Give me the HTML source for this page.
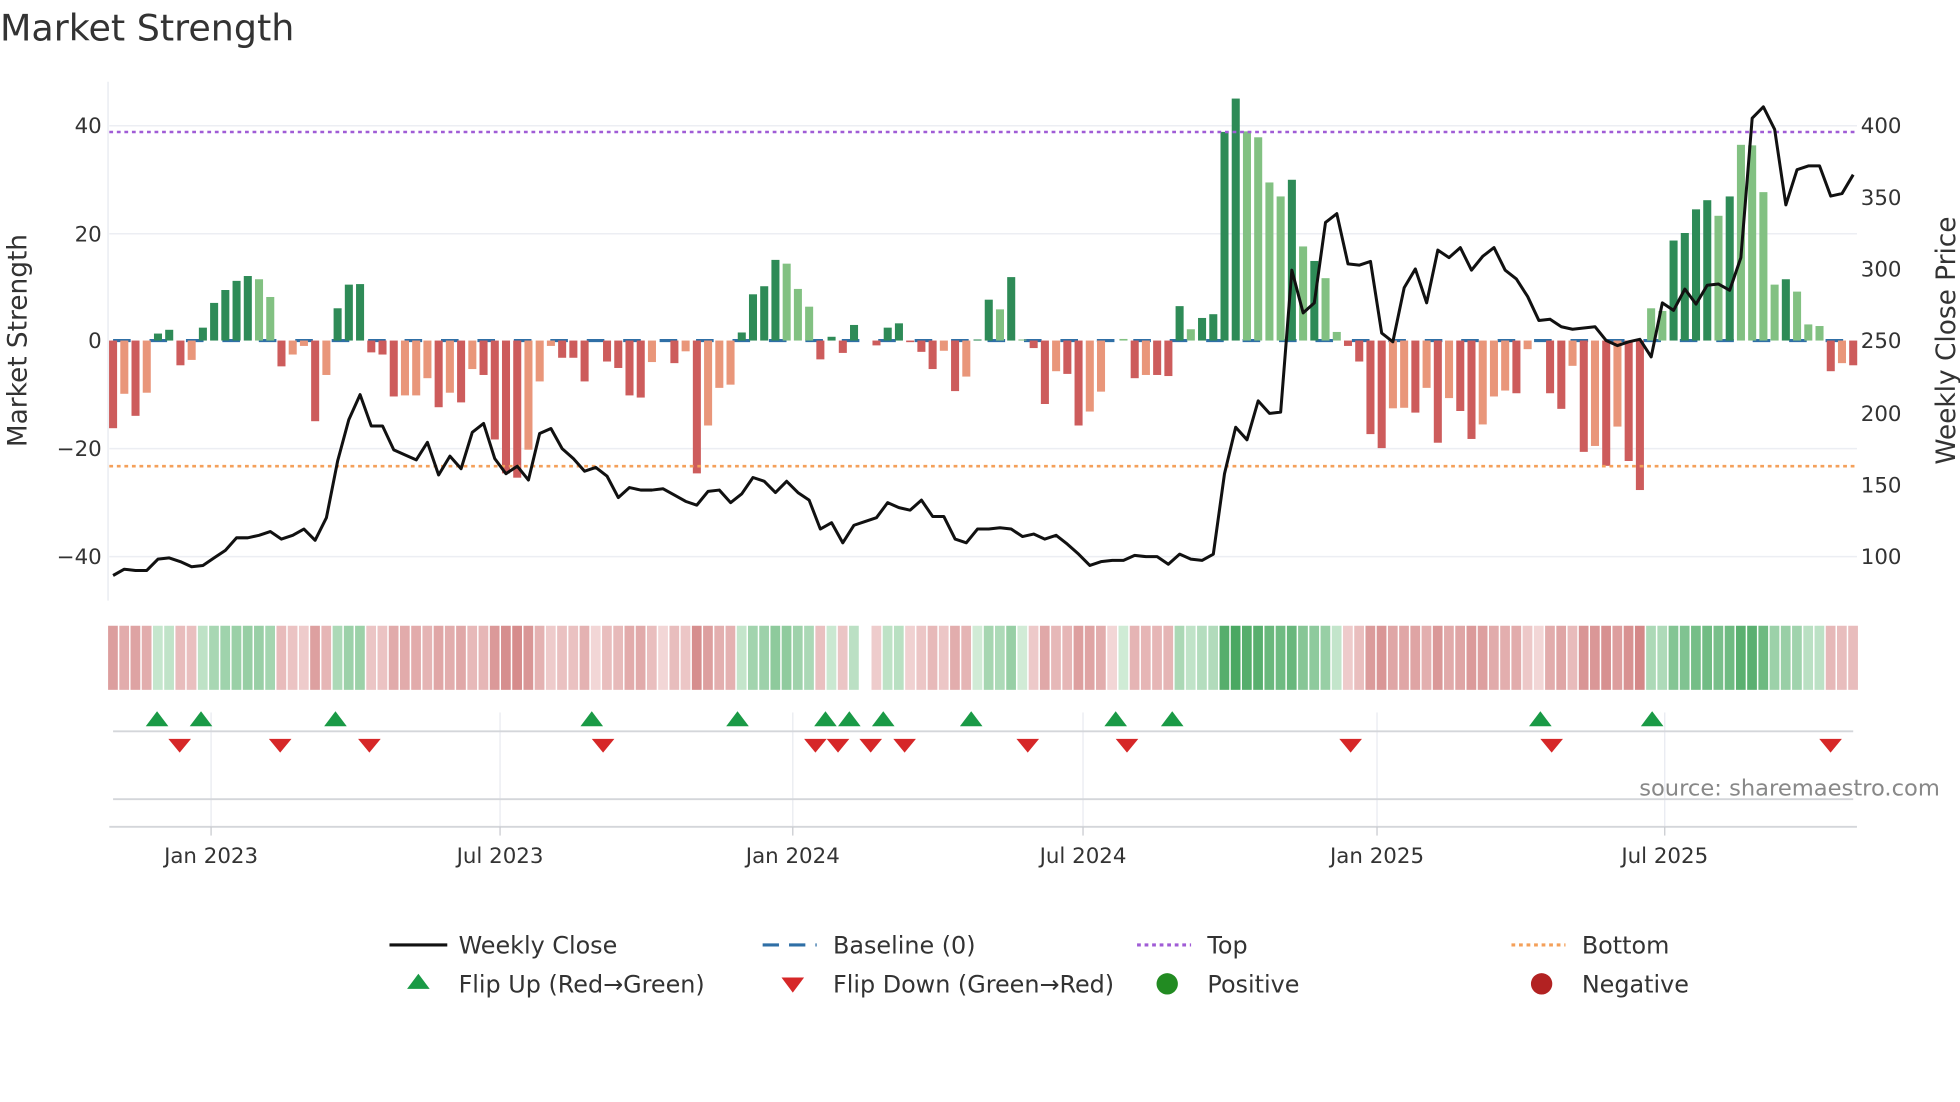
<!DOCTYPE html>
<html><head><meta charset="utf-8"><style>
html,body{margin:0;padding:0;background:#fff;}
svg{display:block;font-family:"DejaVu Sans","Liberation Sans",sans-serif;}
</style></head><body>
<svg id="s" width="1960" height="1102" viewBox="0 0 1560 877" xmlns="http://www.w3.org/2000/svg">
<rect width="1560" height="877" fill="#fff"/>
<text x="0" y="32" font-size="29" fill="#333">Market Strength</text>
<g stroke="#eceef3" stroke-width="1.2">
<line x1="87" y1="100" x2="1478" y2="100"/><line x1="87" y1="186" x2="1478" y2="186"/>
<line x1="87" y1="357" x2="1478" y2="357"/><line x1="87" y1="443" x2="1478" y2="443"/>
</g>
<line x1="86" y1="65" x2="86" y2="478" stroke="#e6e8ee" stroke-width="1"/>
<g font-size="17" fill="#333" text-anchor="end">
<text x="81" y="106">40</text><text x="81" y="192">20</text><text x="81" y="277">0</text>
<text x="81" y="363">−20</text><text x="81" y="449">−40</text>
</g>
<g font-size="17" fill="#333">
<text x="1481" y="106">400</text><text x="1481" y="163">350</text><text x="1481" y="220">300</text>
<text x="1481" y="277">250</text><text x="1481" y="335">200</text><text x="1481" y="392">150</text><text x="1481" y="449">100</text>
</g>
<text transform="translate(21,271) rotate(-90)" font-size="21" fill="#333" text-anchor="middle">Market Strength</text>
<text transform="translate(1556,271) rotate(-90)" font-size="21" fill="#333" text-anchor="middle">Weekly Close Price</text>
<line x1="90" y1="271" x2="1478" y2="271" stroke="#2f6fa6" stroke-width="2.5" stroke-dasharray="14 15"/>
<g id="bars"></g>
<line x1="87" y1="105" x2="1478" y2="105" stroke="#a05cd6" stroke-width="2" stroke-dasharray="3 3"/>
<line x1="87" y1="371" x2="1478" y2="371" stroke="#f4a05a" stroke-width="2" stroke-dasharray="3 3"/>
<polyline id="price" fill="none" stroke="#111" stroke-width="2.4" stroke-linejoin="round"/>
<g id="strip"></g>
<g stroke="#e8eaf0" stroke-width="1">
<line x1="168" y1="567" x2="168" y2="658"/><line x1="398" y1="567" x2="398" y2="658"/>
<line x1="631" y1="567" x2="631" y2="658"/><line x1="862" y1="567" x2="862" y2="658"/>
<line x1="1096" y1="567" x2="1096" y2="658"/><line x1="1325" y1="567" x2="1325" y2="658"/>
</g>
<line x1="90" y1="582" x2="1475" y2="582" stroke="#d4d6da" stroke-width="1.5"/>
<line x1="90" y1="636" x2="1475" y2="636" stroke="#d4d6da" stroke-width="1.5"/>
<line x1="87" y1="658" x2="1478" y2="658" stroke="#d4d6da" stroke-width="1.5"/>
<g stroke="#c8cacf" stroke-width="1">
<line x1="168" y1="658" x2="168" y2="665"/><line x1="398" y1="658" x2="398" y2="665"/>
<line x1="631" y1="658" x2="631" y2="665"/><line x1="862" y1="658" x2="862" y2="665"/>
<line x1="1096" y1="658" x2="1096" y2="665"/><line x1="1325" y1="658" x2="1325" y2="665"/>
</g>
<g id="marks"></g>
<text x="1544" y="633" font-size="18" fill="#888" text-anchor="end">source: sharemaestro.com</text>
<g font-size="17" fill="#333" text-anchor="middle">
<text x="168" y="687">Jan 2023</text><text x="398" y="687">Jul 2023</text><text x="631" y="687">Jan 2024</text>
<text x="862" y="687">Jul 2024</text><text x="1096" y="687">Jan 2025</text><text x="1325" y="687">Jul 2025</text>
</g>
<g font-size="19" fill="#333">
<line x1="310" y1="752" x2="356" y2="752" stroke="#111" stroke-width="2.5"/>
<text x="365" y="759">Weekly Close</text>
<line x1="607" y1="752" x2="650" y2="752" stroke="#2f6fa6" stroke-width="2.5" stroke-dasharray="13 8"/>
<text x="663" y="759">Baseline (0)</text>
<line x1="905" y1="752" x2="948" y2="752" stroke="#a05cd6" stroke-width="2.5" stroke-dasharray="3 3"/>
<text x="961" y="759">Top</text>
<line x1="1203" y1="752" x2="1246" y2="752" stroke="#f4a05a" stroke-width="2.5" stroke-dasharray="3 3"/>
<text x="1259" y="759">Bottom</text>
<polygon points="324,787 342,787 333,775" fill="#1a9a46"/>
<text x="365" y="790">Flip Up (Red→Green)</text>
<polygon points="622,778 640,778 631,790" fill="#d62728"/>
<text x="663" y="790">Flip Down (Green→Red)</text>
<circle cx="929" cy="783" r="8.5" fill="#228b22"/>
<text x="961" y="790">Positive</text>
<circle cx="1227" cy="783" r="8.5" fill="#b22222"/>
<text x="1259" y="790">Negative</text>
</g>
</svg>
<script>
(function(){
var NS="http://www.w3.org/2000/svg";
var B=[[-16.3,'R'],[-9.9,'O'],[-14,'R'],[-9.7,'O'],[1.3,'D'],[2,'D'],[-4.6,'R'],[-3.6,'O'],[2.4,'D'],[7,'D'],
[9.4,'D'],[11.1,'D'],[12,'D'],[11.4,'L'],[8.1,'L'],[-4.8,'R'],[-2.6,'O'],[-1,'O'],[-15,'R'],[-6.4,'O'],
[6,'D'],[10.4,'D'],[10.5,'D'],[-2.2,'R'],[-2.6,'R'],[-10.4,'R'],[-10.2,'O'],[-10.2,'O'],[-7,'O'],[-12.4,'R'],
[-9.7,'O'],[-11.5,'R'],[-5.3,'O'],[-6.4,'R'],[-18.4,'R'],[-24.7,'R'],[-25.5,'R'],[-20.3,'O'],[-7.6,'O'],[-1,'O'],
[-3.2,'R'],[-3.2,'R'],[-7.6,'R'],[0,'R'],[-3.9,'R'],[-5.1,'R'],[-10.2,'R'],[-10.6,'R'],[-4,'O'],[0,'O'],
[-4.2,'R'],[-2,'O'],[-24.7,'R'],[-15.8,'O'],[-8.8,'O'],[-8.2,'O'],[1.5,'D'],[8.6,'D'],[10.1,'D'],[15,'D'],
[14.3,'L'],[9.6,'L'],[6.3,'L'],[-3.5,'R'],[0.7,'D'],[-2.3,'R'],[2.9,'D'],[0,'X'],[-0.9,'R'],[2.4,'D'],
[3.2,'D'],[-0.3,'R'],[-2.1,'R'],[-5.3,'R'],[-1.9,'O'],[-9.4,'R'],[-6.7,'O'],[0.2,'D'],[7.6,'D'],[5.8,'L'],
[11.8,'D'],[0.2,'L'],[-1.4,'R'],[-11.8,'R'],[-5.7,'O'],[-6.2,'R'],[-15.8,'R'],[-13.2,'O'],[-9.5,'O'],[0,'O'],
[0.3,'L'],[-7,'R'],[-6.4,'O'],[-6.4,'R'],[-6.6,'R'],[6.4,'D'],[2.1,'L'],[4.2,'D'],[4.9,'D'],[38.8,'D'],
[45,'D'],[38.9,'L'],[37.8,'L'],[29.4,'L'],[26.8,'L'],[29.9,'D'],[17.5,'L'],[14.8,'D'],[11.6,'L'],[1.6,'L'],
[-1,'R'],[-3.9,'R'],[-17.4,'R'],[-20,'R'],[-12.6,'O'],[-12.5,'O'],[-13.4,'R'],[-8.8,'O'],[-19,'R'],[-10.7,'O'],
[-13.1,'R'],[-18.3,'R'],[-15.6,'O'],[-10.4,'O'],[-9.3,'O'],[-9.8,'R'],[-1.6,'O'],[0,'O'],[-9.8,'R'],[-12.7,'R'],
[-4.7,'O'],[-20.7,'R'],[-19.6,'O'],[-23.3,'R'],[-16,'O'],[-22.4,'R'],[-27.8,'R'],[6,'L'],[5.5,'L'],[18.6,'D'],
[20,'D'],[24.4,'D'],[26.1,'D'],[23.2,'L'],[26.8,'D'],[36.4,'L'],[36.3,'L'],[27.6,'L'],[10.4,'L'],[11.4,'D'],
[9.1,'L'],[3,'L'],[2.7,'L'],[-5.7,'R'],[-4.2,'O'],[-4.6,'R']];
var P=[458,453,454,454,445,444,447,451,450,444,438,428,428,426,423,429,426,421,430,412,
367,334,314,339,339,358,362,366,352,378,363,373,344,337,365,377,371,382,345,341,
357,365,375,372,379,396,388,390,390,389,394,399,402,391,390,400,393,380,383,392,
383,392,398,421,416,432,418,415,412,400,404,406,398,411,411,429,432,421,421,420,
421,427,425,429,426,433,441,450,447,446,446,442,443,443,449,441,445,446,441,377,
340,350,319,329,328,215,249,241,177,170,210,211,208,265,272,229,214,241,199,205,
197,215,204,197,215,222,236,255,254,260,262,261,260,271,275,272,270,284,241,247,
230,242,227,226,231,205,94,85,103,163,135,132,132,156,154,139];
var C={D:'#2e8b57',L:'#82c182',R:'#cd5c5c',O:'#e9967a',X:'#fff'};
var dx=(1475-90)/155, bars=document.getElementById('bars'), strip=document.getElementById('strip');
function lerp(a,b,t){var r=[];for(var k=0;k<3;k++){r.push(Math.round(a[k]+(b[k]-a[k])*t));}return 'rgb('+r.join(',')+')';}
var pts=[];
for(var i=0;i<156;i++){
 var x=90+dx*i,v=B[i][0],c=B[i][1];
 var h=Math.abs(v)*4.28;
 if(h>0.3&&c!=='X'){var r=document.createElementNS(NS,'rect');
  r.setAttribute('x',(x-3.2).toFixed(2));r.setAttribute('width','6.4');
  r.setAttribute('y',(v>0?271-h:271).toFixed(2));r.setAttribute('height',h.toFixed(2));
  r.setAttribute('fill',C[c]);bars.appendChild(r);}
 var col;
 if(c==='X') col='#fff';
 else if(v>0||c==='D'||c==='L'){var t=Math.pow(Math.min(1,v/45),0.6);col=lerp([214,238,219],[74,168,98],t);}
 else {var t2=Math.pow(Math.min(1,-v/28),0.6);col=lerp([242,214,214],[212,136,136],t2);}
 var s=document.createElementNS(NS,'rect');
 s.setAttribute('x',(x-dx/2+0.5).toFixed(2));s.setAttribute('width',(dx-1.2).toFixed(2));
 s.setAttribute('y','498');s.setAttribute('height','51');s.setAttribute('fill',col);strip.appendChild(s);
 pts.push(x.toFixed(1)+','+P[i]);
}
document.getElementById('price').setAttribute('points',pts.join(' '));
var up=[125,160,267,471,587,657,676,703,773,888,933,1226,1315];
var dn=[143,223,294,480,649,667,693,720,818,897,1075,1235,1457];
var m=document.getElementById('marks');
up.forEach(function(x){var p=document.createElementNS(NS,'polygon');
 p.setAttribute('points',(x-9)+',578 '+(x+9)+',578 '+x+',566');p.setAttribute('fill','#1a9a46');m.appendChild(p);});
dn.forEach(function(x){var p=document.createElementNS(NS,'polygon');
 p.setAttribute('points',(x-9)+',588 '+(x+9)+',588 '+x+',599');p.setAttribute('fill','#d62728');m.appendChild(p);});
})();
</script>
</body></html>
